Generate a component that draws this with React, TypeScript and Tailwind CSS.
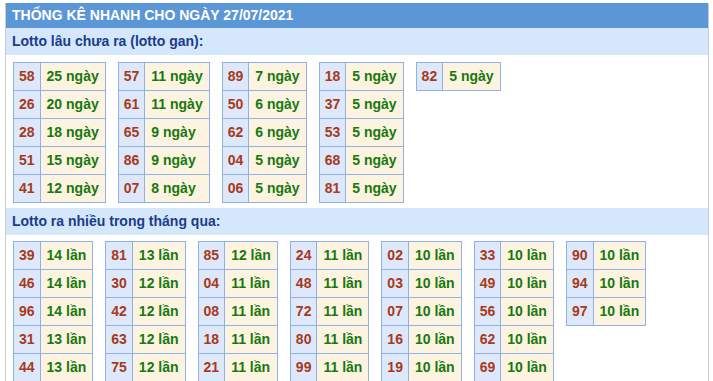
type Row = [string, number];

const gan: Row[][] = [
  [["58", 25], ["26", 20], ["28", 18], ["51", 15], ["41", 12]],
  [["57", 11], ["61", 11], ["65", 9], ["86", 9], ["07", 8]],
  [["89", 7], ["50", 6], ["62", 6], ["04", 5], ["06", 5]],
  [["18", 5], ["37", 5], ["53", 5], ["68", 5], ["81", 5]],
  [["82", 5]],
];

const nhieu: Row[][] = [
  [["39", 14], ["46", 14], ["96", 14], ["31", 13], ["44", 13]],
  [["81", 13], ["30", 12], ["42", 12], ["63", 12], ["75", 12]],
  [["85", 12], ["04", 11], ["08", 11], ["18", 11], ["21", 11]],
  [["24", 11], ["48", 11], ["72", 11], ["80", 11], ["99", 11]],
  [["02", 10], ["03", 10], ["07", 10], ["16", 10], ["19", 10]],
  [["33", 10], ["49", 10], ["56", 10], ["62", 10], ["69", 10]],
  [["90", 10], ["94", 10], ["97", 10]],
];

function LottoTable({ rows, unit }: { rows: Row[]; unit: string }) {
  return (
    <table className="border-collapse self-start">
      <tbody>
        {rows.map(([num, count]) => (
          <tr key={num} className="h-[28px]">
            <td className="border border-[#8fb1e3] bg-[#dde9fa] px-[5px] text-[#a8391b]">{num}</td>
            <td className="border border-[#8fb1e3] bg-[#fdf3e1] px-[6px] text-[#17790f]">
              {count} {unit}
            </td>
          </tr>
        ))}
      </tbody>
    </table>
  );
}

function SectionTitle({ children }: { children: string }) {
  return (
    <div className="flex h-[27px] items-center bg-[#d5e7fb] px-[6px] text-[14px] font-bold text-[#1b3c8c]">
      {children}
    </div>
  );
}

export default function App() {
  return (
    <div className="bg-white px-[5px] pt-[3px] font-['Liberation_Sans',Arial,sans-serif]">
      <div className="w-[704px] border-x border-[#c9cdd3]">
        <div className="flex h-[25px] items-center bg-[#5b96d6] px-[6px] text-[14px] font-bold text-white">
          THỐNG KÊ NHANH CHO NGÀY 27/07/2021
        </div>
        <SectionTitle>Lotto lâu chưa ra (lotto gan):</SectionTitle>
        <div className="flex gap-3 pb-[5px] pl-[7px] pt-[7px] text-[14px] font-bold">
          {gan.map((rows, i) => (
            <LottoTable key={i} rows={rows} unit="ngày" />
          ))}
        </div>
        <SectionTitle>Lotto ra nhiều trong tháng qua:</SectionTitle>
        <div className="flex gap-3 pb-[5px] pl-[7px] pt-[6px] text-[14px] font-bold">
          {nhieu.map((rows, i) => (
            <LottoTable key={i} rows={rows} unit="lần" />
          ))}
        </div>
      </div>
    </div>
  );
}
